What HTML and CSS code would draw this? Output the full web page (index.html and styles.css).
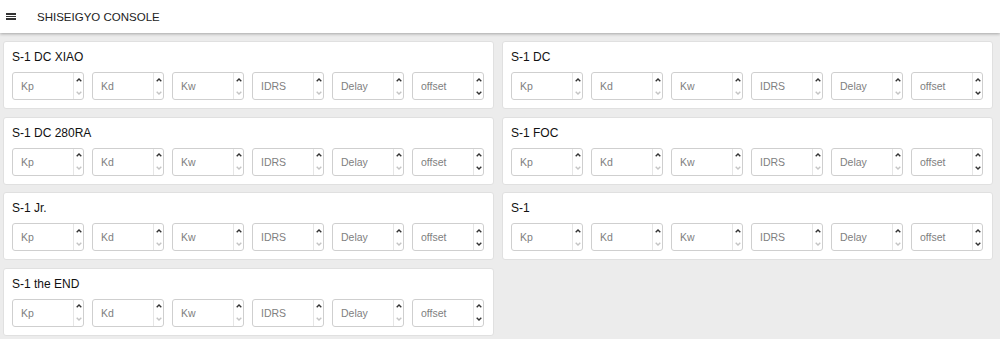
FILE: index.html
```html
<!doctype html>
<html lang="en">
<head>
    <meta charset="UTF-8">
    <title>SHISEIGYO CONSOLE</title>
    <link rel="stylesheet" href="styles.css">
</head>
<body>
<!-- top bar -->
<div class="topbar">
    <span class="menu"><i></i><i></i><i></i></span>
    <span class="brand">SHISEIGYO CONSOLE</span>
</div>
<!-- motor cards -->
<div class="board" id="board"></div>
<script type="text/javascript">
    var motors = ["S-1 DC XIAO", "S-1 DC", "S-1 DC 280RA", "S-1 FOC", "S-1 Jr.", "S-1", "S-1 the END"];
    var params = ["Kp", "Kd", "Kw", "IDRS", "Delay", "offset"];
    var board = document.getElementById("board");
    var up = '<svg width="6" height="4" viewBox="0 0 6 4"><path d="M0.7 3.3 3 1 5.3 3.3" fill="none" stroke="currentColor" stroke-width="1.4"/></svg>';
    var down = '<svg width="6" height="4" viewBox="0 0 6 4"><path d="M0.7 0.7 3 3 5.3 0.7" fill="none" stroke="currentColor" stroke-width="1.4"/></svg>';
    for (var i = 0; i < motors.length; i++) {
        var html = '<div class="title">' + motors[i] + '</div><div class="fields">';
        for (var j = 0; j < params.length; j++) {
            var last = params[j] == "offset" ? " on" : "";
            html += '<label class="num"><input type="text" placeholder="' + params[j] + '">' +
                '<span class="spin"><b class="on">' + up + '</b><b class="' + last + '">' + down + '</b></span></label>';
        }
        html += '</div>';
        var card = document.createElement("div");
        card.className = "card";
        card.innerHTML = html;
        board.appendChild(card);
    }
</script>
</body>
</html>
```

FILE: styles.css
```css
* {
    margin: 0;
    padding: 0;
    box-sizing: border-box;
}

body {
    background: #ececec;
    font-family: "Liberation Sans", Arial, sans-serif;
    color: #222;
}

.topbar {
    height: 33px;
    background: #fff;
    display: flex;
    align-items: center;
    padding-left: 6px;
    box-shadow: 0 1px 3px rgba(0, 0, 0, 0.3);
    position: relative;
}

.menu {
    width: 10px;
    display: flex;
    flex-direction: column;
    gap: 1.2px;
    margin-right: 21px;
}

.menu i {
    display: block;
    height: 1.4px;
    background: #333;
}

.brand {
    font-size: 11.5px;
}

.board {
    display: grid;
    grid-template-columns: 1fr 1fr;
    column-gap: 8px;
    row-gap: 7.5px;
    padding: 8px 7px 0 3px;
}

.card {
    background: #fff;
    border: 1px solid #e0e0e0;
    border-radius: 3px;
    height: 68px;
    padding: 8px 9px 0 8px;
}

.title {
    font-size: 12px;
    line-height: 14px;
    margin-bottom: 8px;
    color: #111;
}

.fields {
    display: flex;
    gap: 8px;
}

.num {
    width: 72px;
    height: 28px;
    border: 1px solid #cfcfcf;
    border-radius: 3px;
    display: flex;
    background: #fff;
}

.num input {
    flex: 1;
    min-width: 0;
    border: 0;
    outline: 0;
    background: transparent;
    padding-left: 8px;
    font-family: inherit;
    font-size: 10.5px;
    color: #333;
}

.num input::placeholder {
    color: #808080;
}

.spin {
    width: 10px;
    border-left: 1px solid #e6e6e6;
    display: flex;
    flex-direction: column;
}

.spin b {
    flex: 1;
    display: flex;
    align-items: center;
    justify-content: center;
    color: #c4c4c4;
}

.spin b.on {
    color: #333;
}

.spin svg {
    display: block;
}
```
